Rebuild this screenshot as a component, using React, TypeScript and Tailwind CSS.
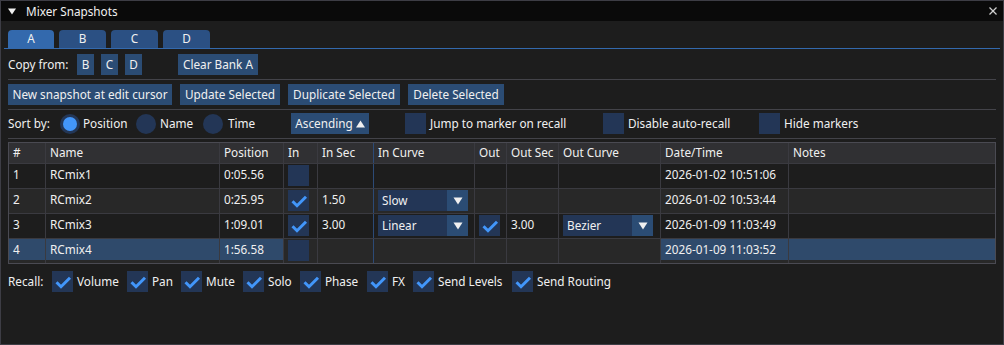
import React from "react";

const FONT = { fontFamily: '"Noto Sans", "Open Sans", sans-serif' };

function Check({ checked }: { checked: boolean }) {
  return (
    <div className="w-[21px] h-[21px] flex-none bg-[#233656]">
      {checked && (
        <svg width="21" height="21" viewBox="0 0 21 21">
          <polyline points="4.5,11.25 9,15.75 18,6.75" fill="none" stroke="#4296fa" strokeWidth="3" strokeLinejoin="miter" />
        </svg>
      )}
    </div>
  );
}

function Radio({ selected }: { selected: boolean }) {
  return (
    <div className="w-[20px] h-[20px] flex-none rounded-full bg-[#233656] flex items-center justify-center">
      {selected && <div className="w-[14px] h-[14px] rounded-full bg-[#4296fa]" />}
    </div>
  );
}

function Btn({ children, w }: { children: React.ReactNode; w: string }) {
  return (
    <div className={`${w} h-[21px] flex-none bg-[#2b4c74] flex items-center justify-center whitespace-nowrap`}>{children}</div>
  );
}

function DownArrow() {
  return (
    <svg width="10" height="8" viewBox="0 0 10 8">
      <polygon points="0.5,0.5 9.5,0.5 5,7.5" fill="#f0f0f0" />
    </svg>
  );
}

function Combo({ value }: { value: string }) {
  return (
    <div className="w-[90px] h-[21px] flex bg-[#233656]">
      <div className="flex-1 flex items-center pl-[4px]">{value}</div>
      <div className="w-[21px] h-[21px] bg-[#2b4c74] flex items-center justify-center">
        <DownArrow />
      </div>
    </div>
  );
}

function Sep() {
  return <div className="h-px bg-[#434349]" />;
}

const COLS = "grid grid-cols-[36px_174px_64px_34px_56px_101px_32px_52px_102px_128px_1fr]";

type Row = {
  n: string;
  name: string;
  pos: string;
  inOn: boolean;
  inSec: string;
  inCurve: string;
  out: boolean | null;
  outSec: string;
  outCurve: string;
  date: string;
};

const rows: Row[] = [
  { n: "1", name: "RCmix1", pos: "0:05.56", inOn: false, inSec: "", inCurve: "", out: null, outSec: "", outCurve: "", date: "2026-01-02 10:51:06" },
  { n: "2", name: "RCmix2", pos: "0:25.95", inOn: true, inSec: "1.50", inCurve: "Slow", out: null, outSec: "", outCurve: "", date: "2026-01-02 10:53:44" },
  { n: "3", name: "RCmix3", pos: "1:09.01", inOn: true, inSec: "3.00", inCurve: "Linear", out: true, outSec: "3.00", outCurve: "Bezier", date: "2026-01-09 11:03:49" },
  { n: "4", name: "RCmix4", pos: "1:56.58", inOn: false, inSec: "", inCurve: "", out: null, outSec: "", outCurve: "", date: "2026-01-09 11:03:52" },
];

function TextCell({ children, sel, first }: { children?: React.ReactNode; sel?: boolean; first?: boolean }) {
  return (
    <div className={first ? "h-[24px]" : "h-[24px] border-l border-[#3a3a40]"}>
      <div className={sel ? "h-[21px] bg-[#2f4a6b] pl-[4px] pt-[2px] leading-[16px] whitespace-nowrap" : "h-[21px] pl-[4px] pt-[2px] leading-[16px] whitespace-nowrap"}>
        {children}
      </div>
    </div>
  );
}

function WidgetCell({ children, blue }: { children?: React.ReactNode; blue?: boolean }) {
  return (
    <div className={blue ? "h-[24px] border-l border-[#2c4a76] pl-[4px] pt-[1px]" : "h-[24px] border-l border-[#3a3a40] pl-[4px] pt-[1px]"}>
      {children}
    </div>
  );
}

function HeadCell({ children, first, blue }: { children: React.ReactNode; first?: boolean; blue?: boolean }) {
  const b = first ? "" : blue ? "border-l border-[#2c4a76]" : "border-l border-[#3a3a40]";
  return <div className={`h-[20px] flex items-center pl-[4px] whitespace-nowrap ${b}`}>{children}</div>;
}

export default function App() {
  return (
    <div style={FONT} className="w-[1004px] h-[345px] bg-[#1d1d1d] border border-[#3d3d45] text-[11.75px] text-[#f0f0f0] flex flex-col overflow-hidden">
      {/* Title bar */}
      <div className="h-[20px] bg-[#0a0a0a] flex items-center flex-none">
        <div className="ml-[7px] w-[8px] flex items-center">
          <svg width="8" height="7" viewBox="0 0 8 7">
            <polygon points="0,0.5 8,0.5 4,6.5" fill="#f0f0f0" />
          </svg>
        </div>
        <div className="ml-[10px] leading-[16px]">Mixer Snapshots</div>
        <div className="ml-auto mr-[6px] w-[8px] h-[8px]">
          <svg width="8" height="8" viewBox="0 0 8 8">
            <line x1="0.5" y1="0.5" x2="7.5" y2="7.5" stroke="#cfcfcf" strokeWidth="1.2" />
            <line x1="7.5" y1="0.5" x2="0.5" y2="7.5" stroke="#cfcfcf" strokeWidth="1.2" />
          </svg>
        </div>
      </div>

      {/* Body */}
      <div className="px-[7px] pt-[9px] flex flex-col">
        {/* Tabs */}
        <div className="flex gap-[5px] h-[18px]">
          {["A", "B", "C", "D"].map((t, i) => (
            <div
              key={t}
              className={i === 0 ? "w-[46px] h-[18px] rounded-t-[4px] bg-[#3369ad] flex items-center justify-center" : "w-[47px] h-[18px] rounded-t-[4px] bg-[#2b5083] flex items-center justify-center"}
            >
              {t}
            </div>
          ))}
        </div>
        <div className="h-px bg-[#3369ad] -mx-[4px]" />

        {/* Copy from */}
        <div className="mt-[5px] h-[21px] flex items-center">
          <div className="w-[69px] flex-none">Copy from:</div>
          <Btn w="w-[17px]">B</Btn>
          <div className="w-[7px] flex-none" />
          <Btn w="w-[17px]">C</Btn>
          <div className="w-[7px] flex-none" />
          <Btn w="w-[17px]">D</Btn>
          <div className="w-[36px] flex-none" />
          <Btn w="w-[80px]">Clear Bank A</Btn>
        </div>
        <div className="mt-[4px]" />
        <Sep />

        {/* Action buttons */}
        <div className="mt-[4px] h-[21px] flex items-center gap-[8px]">
          <Btn w="w-[164px]">New snapshot at edit cursor</Btn>
          <Btn w="w-[100px]">Update Selected</Btn>
          <Btn w="w-[112px]">Duplicate Selected</Btn>
          <Btn w="w-[96px]">Delete Selected</Btn>
        </div>
        <div className="mt-[4px]" />
        <Sep />

        {/* Sort row */}
        <div className="mt-[3px] h-[21px] flex items-center">
          <div className="w-[52px] flex-none">Sort by:</div>
          <div className="w-[76px] flex-none flex items-center gap-[3px]">
            <Radio selected />
            <span>Position</span>
          </div>
          <div className="w-[67px] flex-none flex items-center gap-[4px]">
            <Radio selected={false} />
            <span>Name</span>
          </div>
          <div className="w-[88px] flex-none flex items-center gap-[5px]">
            <Radio selected={false} />
            <span>Time</span>
          </div>
          <div className="w-[114px] flex-none">
            <div className="w-[78px] h-[21px] bg-[#2b4c74] flex items-center justify-center gap-[3px]">
              <span>Ascending</span>
              <svg width="9" height="8" viewBox="0 0 9 8">
                <polygon points="4.5,0.5 9,7.5 0,7.5" fill="#f0f0f0" />
              </svg>
            </div>
          </div>
          <div className="w-[198px] flex-none flex items-center gap-[4px]">
            <Check checked={false} />
            <span>Jump to marker on recall</span>
          </div>
          <div className="w-[156px] flex-none flex items-center gap-[4px]">
            <Check checked={false} />
            <span>Disable auto-recall</span>
          </div>
          <div className="flex items-center gap-[4px]">
            <Check checked={false} />
            <span>Hide markers</span>
          </div>
        </div>
        <div className="mt-[4px]" />
        <Sep />

        {/* Table */}
        <div className="mt-[3px] border border-[#4a4a52]">
          <div className={`${COLS} bg-[#303033]`}>
            <HeadCell first>#</HeadCell>
            <HeadCell>Name</HeadCell>
            <HeadCell>Position</HeadCell>
            <HeadCell>In</HeadCell>
            <HeadCell>In Sec</HeadCell>
            <HeadCell blue>In Curve</HeadCell>
            <HeadCell>Out</HeadCell>
            <HeadCell>Out Sec</HeadCell>
            <HeadCell>Out Curve</HeadCell>
            <HeadCell>Date/Time</HeadCell>
            <HeadCell>Notes</HeadCell>
          </div>
          {rows.map((r, i) => {
            const sel = i === 3;
            return (
              <div key={r.n} className={i % 2 === 1 ? `${COLS} border-t border-[#3a3a40] bg-[#282828]` : `${COLS} border-t border-[#3a3a40] bg-[#1d1d1d]`}>
                <TextCell first sel={sel}>{r.n}</TextCell>
                <TextCell sel={sel}>{r.name}</TextCell>
                <TextCell sel={sel}>{r.pos}</TextCell>
                <WidgetCell>
                  <Check checked={r.inOn} />
                </WidgetCell>
                <TextCell>{r.inSec}</TextCell>
                <WidgetCell blue>{r.inCurve && <Combo value={r.inCurve} />}</WidgetCell>
                <WidgetCell>{r.out !== null && <Check checked={r.out} />}</WidgetCell>
                <TextCell>{r.outSec}</TextCell>
                <WidgetCell>{r.outCurve && <Combo value={r.outCurve} />}</WidgetCell>
                <TextCell sel={sel}>{r.date}</TextCell>
                <TextCell sel={sel} />
              </div>
            );
          })}
        </div>

        {/* Recall row */}
        <div className="mt-[7px] h-[21px] flex items-center">
          <div className="w-[44px] flex-none">Recall:</div>
          {[
            ["Volume", "w-[75px]"],
            ["Pan", "w-[54px]"],
            ["Mute", "w-[62px]"],
            ["Solo", "w-[57px]"],
            ["Phase", "w-[67px]"],
            ["FX", "w-[46px]"],
            ["Send Levels", "w-[99px]"],
            ["Send Routing", "w-[120px]"],
          ].map(([label, w]) => (
            <div key={label} className={`${w} flex-none flex items-center gap-[4px]`}>
              <Check checked />
              <span className="whitespace-nowrap">{label}</span>
            </div>
          ))}
        </div>
      </div>
    </div>
  );
}
